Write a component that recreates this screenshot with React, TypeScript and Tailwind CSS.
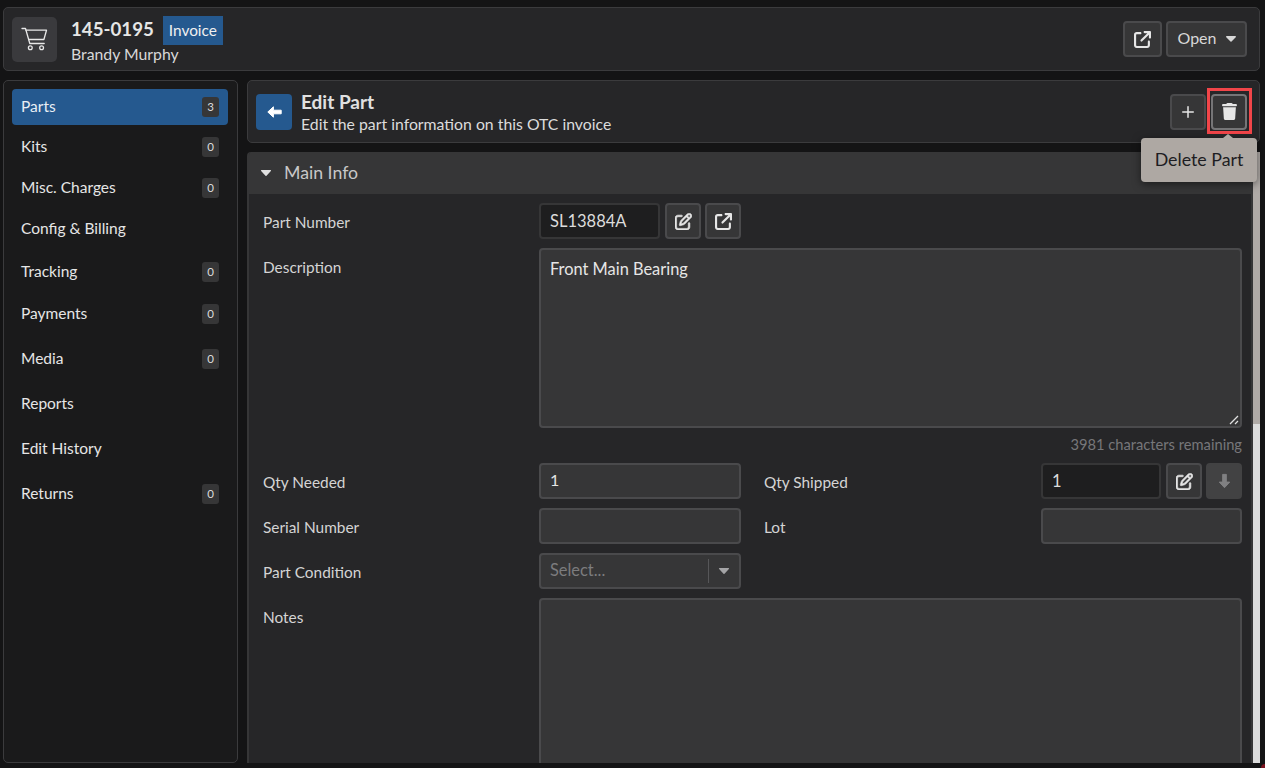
import { Plus } from 'lucide-react';
import { FaArrowUpRightFromSquare, FaRegPenToSquare, FaTrash } from 'react-icons/fa6';

const navItems: { label: string; count?: number; h: string }[] = [
  { label: 'Parts', count: 3, h: 'h-9' },
  { label: 'Kits', count: 0, h: 'h-[43px]' },
  { label: 'Misc. Charges', count: 0, h: 'h-[40px]' },
  { label: 'Config & Billing', h: 'h-[41px]' },
  { label: 'Tracking', count: 0, h: 'h-[46px]' },
  { label: 'Payments', count: 0, h: 'h-[38px]' },
  { label: 'Media', count: 0, h: 'h-[51px]' },
  { label: 'Reports', h: 'h-[40px]' },
  { label: 'Edit History', h: 'h-[50px]' },
  { label: 'Returns', count: 0, h: 'h-[40px]' },
];

function IconButton({ children, className = '' }: { children: React.ReactNode; className?: string }) {
  return (
    <button className={`grid h-9 w-9 shrink-0 place-items-center rounded-[4px] border-2 border-[#4a4a4c] bg-[#363637] text-[#e6e6e6] ${className}`}>
      {children}
    </button>
  );
}

function EditIcon() {
  return <FaRegPenToSquare size={17} stroke="currentColor" strokeWidth={18} />;
}

function Caret({ className = '' }: { className?: string }) {
  return (
    <svg viewBox="0 0 12 7" className={className} fill="currentColor">
      <path d="M.8 0h10.4c.7 0 1 .8.5 1.3L6.6 6.6a.8.8 0 0 1-1.2 0L.3 1.3C-.2.8.1 0 .8 0z" />
    </svg>
  );
}

function BlockArrow({ className = '' }: { className?: string }) {
  return (
    <svg viewBox="0 0 15 12" className={className} fill="currentColor" stroke="currentColor" strokeWidth="1" strokeLinejoin="round">
      <path d="M.8 6 6.4.8v3.4h7.8v3.6H6.4v3.4z" />
    </svg>
  );
}

function CartIcon() {
  return (
    <svg viewBox="0 0 27 24" className="h-[24px] w-[27px]" fill="none" stroke="#e8e8e8" strokeWidth="1.3" strokeLinecap="round" strokeLinejoin="round">
      <path d="M1 1.5h3.5L8.8 16.5h14.4" />
      <path d="M5 3.2h20.5l-2.6 9.3H7.6" />
      <circle cx="9.3" cy="20.8" r="1.9" />
      <circle cx="20.6" cy="20.8" r="1.9" />
    </svg>
  );
}

function Label({ children }: { children: React.ReactNode }) {
  return <div className="flex h-9 items-center pt-[3px] text-[15.4px] text-[#d4d4d4]">{children}</div>;
}

const inputLight = 'h-9 rounded-[4px] border-2 border-[#4a4a4c] bg-[#363637] px-[9px] pb-[2px] text-[16px] text-[#e6e6e6]';
const inputDark = 'flex h-9 items-center rounded-[4px] border-2 border-[#363637] bg-[#1e1e1f] px-[9px] text-[16.5px] text-[#dcdcdc]';

export default function App() {
  return (
    <div className="relative h-[768px] w-[1265px] overflow-hidden bg-[#141415] font-['Lato','Noto_Sans',sans-serif] text-[#e6e6e6]">
      <div className="flex h-full flex-col pb-[5px] pl-[3px] pr-[5px] pt-[7px]">
        <header className="flex h-[64px] shrink-0 items-center rounded-[5px] border border-[#3b3b3d] bg-[#262628] pl-[8px] pr-[12px]">
          <div className="grid h-[45px] w-[45px] place-items-center rounded-[5px] bg-[#3a3a3d]">
            <CartIcon />
          </div>
          <div className="ml-[14px] mt-[8px] flex flex-col self-start">
            <div className="flex items-start">
              <span className="text-[18.7px] font-bold leading-[27px] text-[#e6e6e6]">145-0195</span>
              <span className="ml-[9px] flex h-[29px] w-[60px] items-center justify-center bg-[#25598f] text-[15.4px] text-[#f0f0f0]">Invoice</span>
            </div>
            <span className="text-[15.8px] leading-[17px] text-[#d8d8d8]">Brandy Murphy</span>
          </div>
          <div className="ml-auto flex gap-[4px]">
            <IconButton className="!w-[39px]"><FaArrowUpRightFromSquare size={17} /></IconButton>
            <button className="flex h-9 w-[81px] items-center justify-center gap-[9px] rounded-[4px] border-2 border-[#4a4a4c] bg-[#363637] pb-[2px] text-[16px] text-[#d8d8d8]">
              Open <Caret className="mt-[2px] h-[6px] w-[10px]" />
            </button>
          </div>
        </header>

        <div className="mt-[9px] flex min-h-0 flex-1 gap-[9px]">
          <aside className="flex w-[235px] shrink-0 flex-col rounded-[5px] border border-[#3b3b3d] bg-[#1a1a1b] pl-[8px] pr-[9px] pt-[8px]">
            {navItems.map((n, i) => (
              <div
                key={n.label}
                className={`flex ${n.h} shrink-0 items-center justify-between rounded-[4px] pl-[9px] pr-[9px] text-[15.5px] ${i === 0 ? 'bg-[#25598f] text-[#e8eef5]' : 'text-[#e6e6e6]'}`}
              >
                <span>{n.label}</span>
                {n.count !== undefined && (
                  <span className="grid h-[20px] w-[17px] place-items-center rounded-[3px] bg-[#363637] text-[11.5px] text-[#dcdcdc]">
                    {n.count}
                  </span>
                )}
              </div>
            ))}
          </aside>

          <main className="flex min-w-0 flex-1 flex-col">
            <div className="flex h-[63px] shrink-0 items-center rounded-[5px] border border-[#3b3b3d] bg-[#262628] pl-[8px] pr-[12px]">
              <div className="grid h-9 w-9 place-items-center rounded-[4px] bg-[#25598f]">
                <BlockArrow className="h-[12px] w-[15px] text-white" />
              </div>
              <div className="ml-[9px] pt-[2px]">
                <div className="text-[19px] font-bold leading-[22px] text-[#e0e0e0]">Edit Part</div>
                <div className="text-[15.8px] leading-[22px] text-[#dcdcdc]">Edit the part information on this OTC invoice</div>
              </div>
              <div className="ml-auto flex gap-[5px]">
                <IconButton><Plus size={18} strokeWidth={2} /></IconButton>
                <IconButton className="border-[#757577] bg-[#4d4d4f]">
                  <FaTrash size={17} />
                </IconButton>
              </div>
            </div>

            <div className="mt-[9px] flex min-h-0 flex-1">
              <section className="min-w-0 flex-1 overflow-hidden rounded-t-[4px] border-x-2 border-[#363637] bg-[#262628]">
                <div className="flex h-[42px] items-center bg-[#363637] pl-[11px] text-[17.7px] text-[#c8c8c8]">
                  <Caret className="h-[6px] w-[12px] text-[#e0e0e0]" />
                  <span className="ml-[12px]">Main Info</span>
                </div>
                <div className="flex flex-col gap-[9px] pl-[14px] pr-[9px] pt-[9px]">
                  <div className="grid grid-cols-[276px_1fr]">
                    <Label>Part Number</Label>
                    <div className="flex gap-[4px]">
                      <div className={`${inputDark} w-[121px]`}>SL13884A</div>
                      <div className="ml-px flex gap-[4px]">
                        <IconButton><EditIcon /></IconButton>
                        <IconButton><FaArrowUpRightFromSquare size={17} /></IconButton>
                      </div>
                    </div>
                  </div>

                  <div className="grid grid-cols-[276px_1fr]">
                    <Label>Description</Label>
                    <div>
                      <div className="relative h-[180px] rounded-[4px] border-2 border-[#4a4a4c] bg-[#363637] px-[9px] pt-[7px] text-[16.4px] text-[#e6e6e6]">
                        Front Main Bearing
                        <svg viewBox="0 0 10 10" className="absolute bottom-[1px] right-[1px] h-[10px] w-[10px]" stroke="#e0e0e0" strokeWidth="1.3">
                          <path d="M1 9l8-8M6 9l3-3" />
                        </svg>
                      </div>
                      <div className="mt-[6px] h-[20px] text-right text-[14.7px] leading-[20px] text-[#77777a]">3981 characters remaining</div>
                    </div>
                  </div>

                  <div className="grid grid-cols-[276px_202px_23px_277px_1fr]">
                    <Label>Qty Needed</Label>
                    <div className={`${inputLight} flex items-center`}>1</div>
                    <div />
                    <Label>Qty Shipped</Label>
                    <div className="flex gap-[4px]">
                      <div className={`${inputDark} w-[120px]`}>1</div>
                      <div className="ml-px flex gap-[4px]">
                        <IconButton><EditIcon /></IconButton>
                        <IconButton className="border-[#424243] bg-[#424243] !text-[#808082]">
                          <BlockArrow className="h-[12px] w-[15px] -rotate-90" />
                        </IconButton>
                      </div>
                    </div>
                  </div>

                  <div className="grid grid-cols-[276px_202px_23px_277px_1fr]">
                    <Label>Serial Number</Label>
                    <div className={inputLight} />
                    <div />
                    <Label>Lot</Label>
                    <div className={inputLight} />
                  </div>

                  <div className="grid grid-cols-[276px_202px]">
                    <Label>Part Condition</Label>
                    <div className="flex h-9 items-center rounded-[4px] border-2 border-[#4a4a4c] bg-[#363637] pl-[9px] text-[16.4px] text-[#7c7c7e]">
                      <span className="mb-[1px]">Select...</span>
                      <span className="ml-auto h-[24px] w-px bg-[#575759]" />
                      <Caret className="mx-[9px] h-[6px] w-[12px] text-[#a4a4a6]" />
                    </div>
                  </div>

                  <div className="grid grid-cols-[276px_1fr]">
                    <Label>Notes</Label>
                    <div className="h-[180px] rounded-[4px] border-2 border-[#4a4a4c] bg-[#363637]" />
                  </div>
                </div>
              </section>

              <div className="w-[7px] shrink-0 bg-[#dcdcdc]">
                <div className="h-[272px] bg-[#b0aba7]" />
              </div>
            </div>
          </main>
        </div>
      </div>

      {/* highlight around the delete button */}
      <div className="absolute left-[1207px] top-[88px] h-[46px] w-[45px] border-[3px] border-[#f24549]" />

      {/* tooltip */}
      <div className="absolute left-[1141px] top-[138px] flex h-[44px] w-[116px] items-center justify-center rounded-[4px] bg-[#aea8a3] pb-[2px] text-[17.8px] text-[#1d1d22] shadow-[0_2px_8px_rgba(0,0,0,0.5)]">
        Delete Part
        <span className="absolute left-[82px] top-[-4px] h-0 w-0 border-x-[5px] border-b-[4px] border-x-transparent border-b-[#aea8a3]" />
      </div>

      {/* sliver of the window's corner */}
      <div className="absolute bottom-0 right-0 h-[4px] w-[4px] rounded-tl-full bg-[#7a1420]" />
    </div>
  );
}
